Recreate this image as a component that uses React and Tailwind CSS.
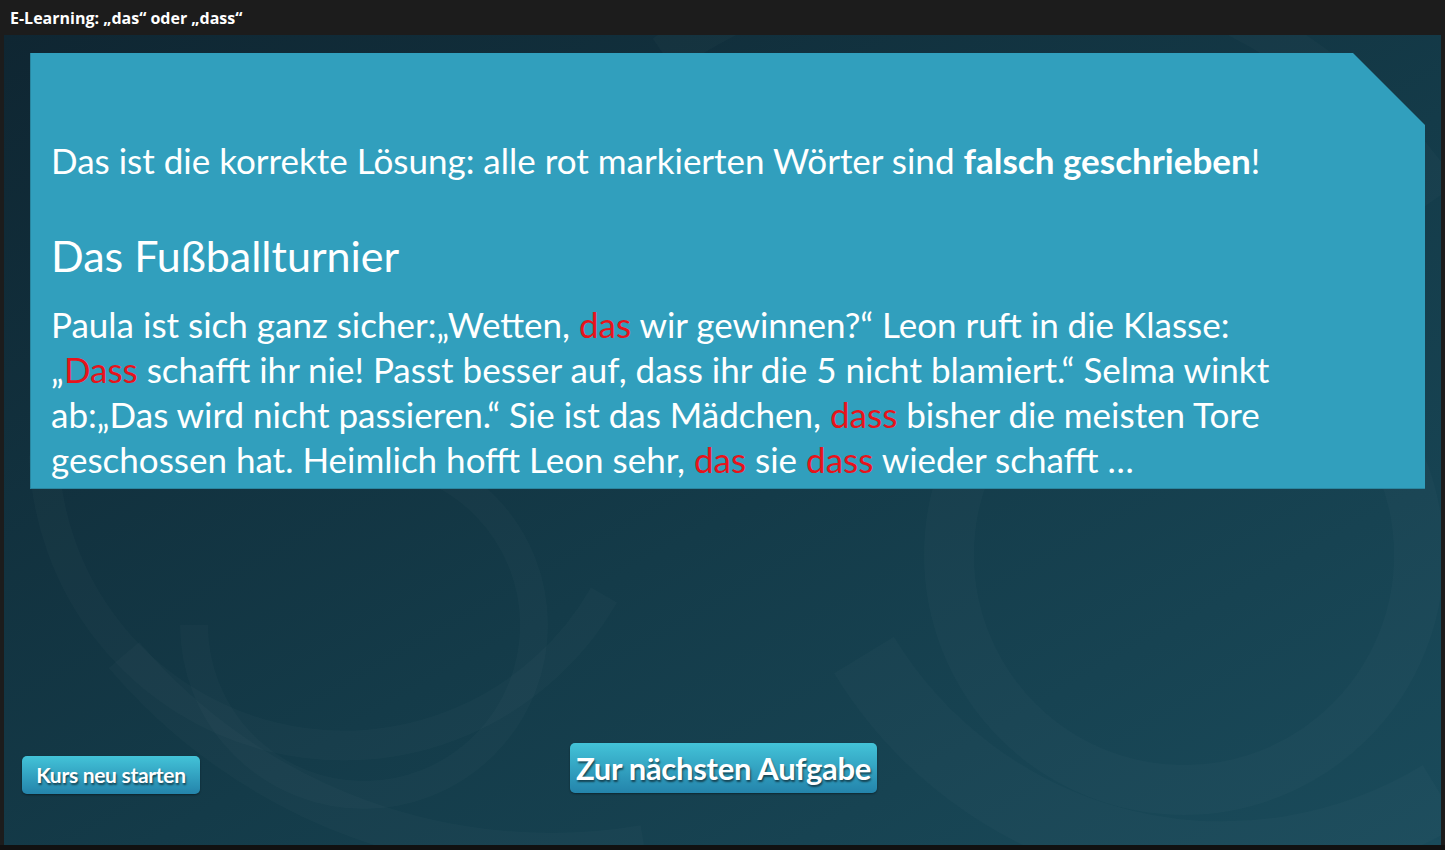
import React from 'react';

const Red = ({ children }) => <span className="text-[#e8131b]">{children}</span>;

// faint decorative rings behind the panel
const Backdrop = () => (
  <svg className="absolute inset-0 h-full w-full" viewBox="0 0 1437 810" preserveAspectRatio="none">
    <defs>
      <linearGradient id="bg" x1="0" y1="0" x2="1" y2="1">
        <stop offset="0" stopColor="#0f2632" />
        <stop offset="0.55" stopColor="#143b49" />
        <stop offset="1" stopColor="#1a4b5b" />
      </linearGradient>
    </defs>
    <rect width="1437" height="810" fill="url(#bg)" />
    <g fill="none" stroke="#ffffff" strokeOpacity="0.02">
      <path d="M 190 590 A 170 170 0 1 0 360 420" strokeWidth="28" />
      <path d="M 40 420 A 300 300 0 0 0 600 560" strokeWidth="30" />
      <circle cx="1180" cy="520" r="235" strokeWidth="50" />
      <path d="M 860 620 A 420 420 0 0 0 1437 760" strokeWidth="70" />
      <path d="M 660 20 A 560 560 0 0 1 1437 160" strokeWidth="40" />
      <path d="M 120 620 A 560 560 0 0 0 640 810" strokeWidth="40" />
    </g>
  </svg>
);

const App = () => {
  return (
    <div className="w-[1445px] h-[850px] bg-[#1c1c1c] flex flex-col overflow-hidden" style={{ fontFamily: 'Lato, "Open Sans", sans-serif' }}>
      <div className="h-[35px] shrink-0 flex items-center px-[10px] text-white text-[16px] font-bold" style={{ fontFamily: '"Open Sans", sans-serif' }}>
        E-Learning: „das“ oder „dass“
      </div>
      <div className="relative mx-[4px] h-[810px] shrink-0 overflow-hidden">
        <Backdrop />
        <div className="relative h-full flex flex-col">
          <div
            className="mt-[18px] ml-[26px] w-[1395px] h-[436px] bg-[#319fbd] border-l border-b border-[#2a86a0] text-white pl-[20px] pt-[84px]"
            style={{ clipPath: 'polygon(0 0, 1323px 0, 1395px 72px, 1395px 100%, 0 100%)' }}
          >
            <p className="text-[35px] leading-[46px]">
              Das ist die korrekte Lösung: alle rot markierten Wörter sind <b>falsch geschrieben</b>!
            </p>
            <h2 className="mt-[45px] text-[43px] leading-[56px]">Das Fußballturnier</h2>
            <p className="mt-[18px] text-[35px] leading-[45px]">
              Paula ist sich ganz sicher:„Wetten, <Red>das</Red> wir gewinnen?“ Leon ruft in die Klasse:
              <br />
              „<Red>Dass</Red> schafft ihr nie! Passt besser auf, dass ihr die 5 nicht blamiert.“ Selma winkt
              <br />
              ab:„Das wird nicht passieren.“ Sie ist das Mädchen, <Red>dass</Red> bisher die meisten Tore
              <br />
              geschossen hat. Heimlich hofft Leon sehr, <Red>das</Red> sie <Red>dass</Red> wieder schafft …
            </p>
          </div>
          <div className="flex-1" />
          <div className="relative h-[115px]">
            <button
              className="absolute left-[18px] top-[26px] w-[178px] h-[38px] rounded-[5px] bg-gradient-to-b from-[#43c3d8] to-[#2484ab] text-white text-[21px] font-bold tracking-[-0.3px] shadow-[0_1px_2px_rgba(0,0,0,0.4)]"
              style={{ textShadow: '1px 2px 2px rgba(0,0,0,0.55)' }}
            >
              Kurs neu starten
            </button>
            <button
              className="absolute left-[566px] top-[13px] w-[307px] h-[50px] rounded-[5px] bg-gradient-to-b from-[#43c3d8] to-[#2484ab] text-white text-[31px] font-bold tracking-[-0.3px] shadow-[0_1px_2px_rgba(0,0,0,0.4)]"
              style={{ textShadow: '1px 2px 2px rgba(0,0,0,0.55)' }}
            >
              Zur nächsten Aufgabe
            </button>
          </div>
        </div>
      </div>
      <div className="h-[5px] bg-[#111]" />
    </div>
  );
};

export default App;
